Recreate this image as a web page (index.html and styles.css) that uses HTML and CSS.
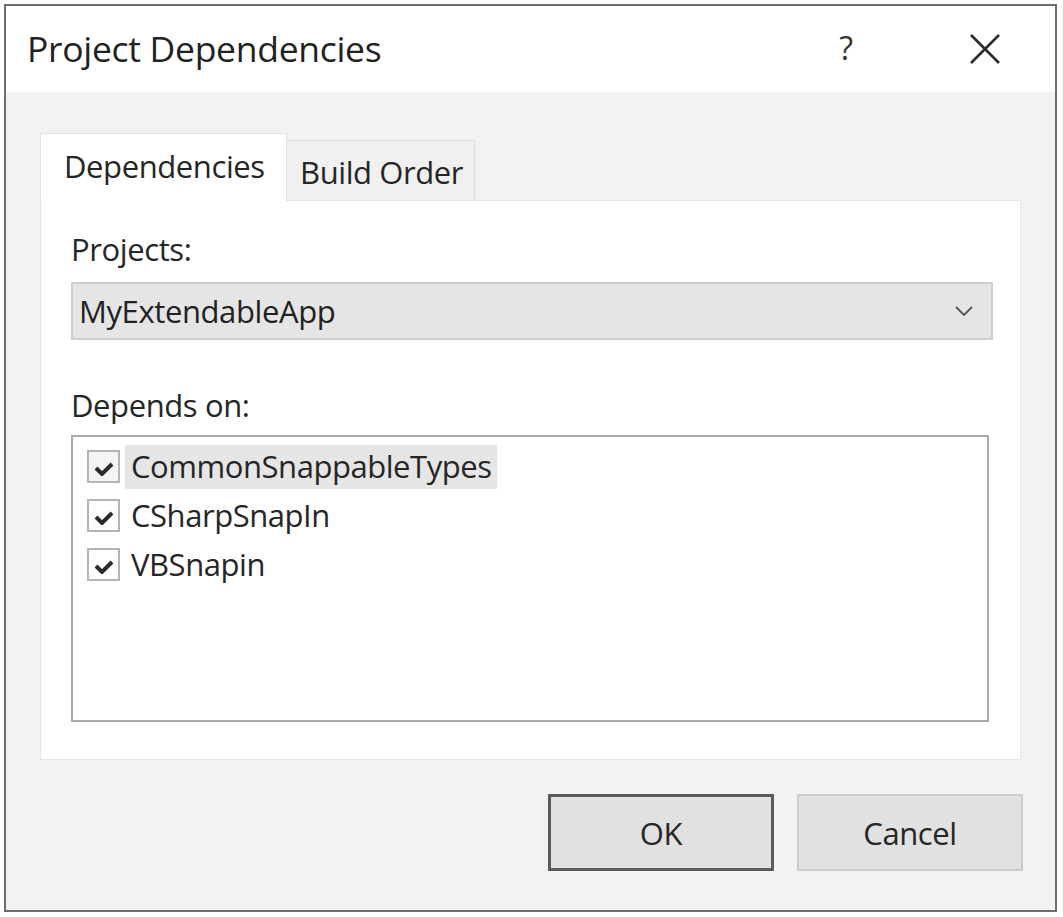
FILE: index.html
```html
<!DOCTYPE html>
<html lang="en">
<head>
<meta charset="utf-8">
<title>Project Dependencies</title>
<link rel="stylesheet" href="styles.css">
</head>
<body>
<div class="window">
  <div class="titlebar">
    <div class="title">Project Dependencies</div>
    <div class="title-buttons">
      <span class="help">?</span>
      <svg class="close" width="32" height="32" viewBox="0 0 32 32"><path d="M2 2 L30 30 M30 2 L2 30" stroke="#2b2b2b" stroke-width="2.6" fill="none"/></svg>
    </div>
  </div>
  <div class="content">
    <div class="tabs">
      <div class="tab active">Dependencies</div>
      <div class="tab">Build Order</div>
    </div>
    <div class="panel">
      <div class="label">Projects:</div>
      <div class="combo">
        <span class="combo-text">MyExtendableApp</span>
        <svg class="chevron" width="18" height="10" viewBox="0 0 18 10"><path d="M1 1 L9 9 L17 1" stroke="#555" stroke-width="1.8" fill="none"/></svg>
      </div>
      <div class="label depends">Depends on:</div>
      <div class="listbox">
        <div class="item">
          <span class="check first"><svg width="20" height="14" viewBox="0 0 20 14"><path d="M2 6 L8 12 L18 2" stroke="#2b2b2b" stroke-width="4" fill="none"/></svg></span>
          <span class="item-text selected">CommonSnappableTypes</span>
        </div>
        <div class="item">
          <span class="check"><svg width="20" height="14" viewBox="0 0 20 14"><path d="M2 6 L8 12 L18 2" stroke="#2b2b2b" stroke-width="4" fill="none"/></svg></span>
          <span class="item-text">CSharpSnapIn</span>
        </div>
        <div class="item">
          <span class="check"><svg width="20" height="14" viewBox="0 0 20 14"><path d="M2 6 L8 12 L18 2" stroke="#2b2b2b" stroke-width="4" fill="none"/></svg></span>
          <span class="item-text">VBSnapin</span>
        </div>
      </div>
    </div>
    <div class="buttons">
      <button class="btn default">OK</button>
      <button class="btn">Cancel</button>
    </div>
  </div>
</div>
</body>
</html>
```
FILE: styles.css
```css
html, body {
  margin: 0;
  padding: 0;
  background: #ffffff;
}
body {
  font-family: "Open Sans", "Noto Sans", sans-serif;
  color: #262626;
  padding: 4px 0 0 4px;
}
.window {
  width: 1053px;
  height: 908px;
  box-sizing: border-box;
  border: 2px solid #6e6e6e;
  display: flex;
  flex-direction: column;
  background: #f2f2f2;
}
.titlebar {
  height: 86px;
  background: #ffffff;
  display: flex;
  align-items: center;
  justify-content: space-between;
  padding: 0 0 0 21px;
  flex: none;
}
.title {
  font-size: 35.5px;
  letter-spacing: -0.3px;
  color: #222;
  margin-top: -2px;
  white-space: nowrap;
}
.title-buttons {
  display: flex;
  align-items: center;
}
.help {
  font-size: 32px;
  color: #333;
  margin-right: 116px;
  margin-top: -4px;
}
.close {
  margin-right: 54px;
}
.content {
  flex: 1;
  display: flex;
  flex-direction: column;
  padding: 41px 32px 0 34px;
}
.tabs {
  display: flex;
  align-items: flex-end;
  height: 67px;
  flex: none;
}
.tab {
  font-size: 31px;
  letter-spacing: -0.4px;
  box-sizing: border-box;
  height: 60px;
  display: flex;
  align-items: center;
  border: 1px solid #dcdcdc;
  border-bottom: none;
  background: #f0f0f0;
  white-space: nowrap;
}
.tab.active {
  background: #ffffff;
  height: 68px;
  width: 247px;
  padding: 11px 0 0 23px;
  border-color: #e3e3e3;
  margin-bottom: -1px;
  position: relative;
  z-index: 1;
  align-items: flex-start;
}
.tab:not(.active) {
  width: 188px;
  border-left: none;
  padding: 2px 0 0 13px;
}
.panel {
  background: #ffffff;
  border: 1px solid #e6e6e6;
  height: 560px;
  width: 981px;
  box-sizing: border-box;
  padding: 28px 30px 0 30px;
  flex: none;
}
.label {
  font-size: 31px;
  letter-spacing: -0.4px;
  color: #262626;
  line-height: 40px;
}
.combo {
  margin-top: 13px;
  margin-right: -3px;
  height: 58px;
  box-sizing: border-box;
  border: 2px solid #cdcdcd;
  background: #e5e5e5;
  display: flex;
  align-items: center;
  justify-content: space-between;
  padding: 0 18px 0 6px;
}
.combo-text {
  font-size: 31px;
  letter-spacing: -0.4px;
  color: #222;
}
.depends {
  margin-top: 45px;
}
.listbox {
  margin-top: 10px;
  width: 918px;
  height: 287px;
  box-sizing: border-box;
  border: 2px solid #a9a9a9;
  background: #fff;
  padding: 5px 0 0 14px;
}
.item {
  display: flex;
  align-items: center;
  height: 49px;
}
.check {
  width: 33px;
  height: 33px;
  box-sizing: border-box;
  border: 2px solid #b5b5b5;
  display: flex;
  align-items: flex-end;
  justify-content: center;
  padding-bottom: 5px;
  background: #fff;
  margin-right: 5px;
}
.check.first {
  background: #f4f4f4;
}
.item-text {
  font-size: 31px;
  letter-spacing: -0.45px;
  color: #262626;
  padding: 0 5px 2px 6px;
}
.item-text.selected {
  background: #e6e6e6;
}
.buttons {
  display: flex;
  justify-content: flex-end;
  gap: 23px;
  margin-top: 34px;
}
.btn {
  width: 226px;
  height: 77px;
  box-sizing: border-box;
  font-family: "Open Sans", "Noto Sans", sans-serif;
  font-size: 31px;
  letter-spacing: -0.4px;
  color: #262626;
  background: #e1e1e1;
  border: 2px solid #cccccc;
  padding: 0;
}
.btn.default {
  border: 3px solid #5a5a5a;
}
```
